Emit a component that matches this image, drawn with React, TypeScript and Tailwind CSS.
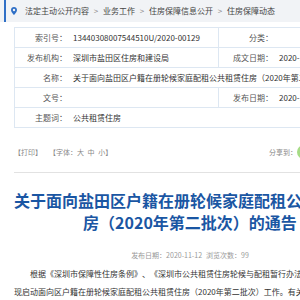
import React from "react";

type Pair = { label: string; value: string };

type Row = {
  left: Pair;
  right?: Pair;
};

const rows: Row[] = [
  {
    left: { label: "索引号：", value: "13440308007544510U/2020-00129" },
    right: { label: "分类：", value: "" },
  },
  {
    left: { label: "发布机构：", value: "深圳市盐田区住房和建设局" },
    right: { label: "成文日期：", value: "2020-11-12" },
  },
  {
    left: {
      label: "名称：",
      value:
        "关于面向盐田区户籍在册轮候家庭配租公共租赁住房（2020年第二批次）的通告",
    },
  },
  {
    left: { label: "文号：", value: "" },
    right: { label: "发布日期：", value: "2020-11-12" },
  },
  { left: { label: "主题词：", value: "公共租赁住房" } },
];

const crumbs = ["法定主动公开内容", "业务工作", "住房保障信息公开", "住房保障动态"];

function Pin() {
  return (
    <svg width="6" height="8" viewBox="0 0 12 16" className="shrink-0">
      <path
        d="M6 0C2.7 0 0 2.6 0 5.9 0 10.3 6 16 6 16s6-5.7 6-10.1C12 2.6 9.3 0 6 0zm0 8.3a2.4 2.4 0 1 1 0-4.8 2.4 2.4 0 0 1 0 4.8z"
        fill="#2f6fc6"
      />
    </svg>
  );
}

function Breadcrumb() {
  return (
    <div className="flex h-[22px] items-center bg-[#f1f3f6] text-[8px] leading-[22px] text-[#444]">
      <div className="ml-[4px] h-full w-[2px] bg-[#2f6fc6]" />
      <div className="ml-[5px]">
        <Pin />
      </div>
      <div className="ml-[8px] flex items-center whitespace-nowrap">
        {crumbs.map((c, i) => (
          <span key={c} className="flex items-center">
            {i > 0 && <span className="mx-[4px] w-[6px] text-center text-[#888]">&gt;</span>}
            {c}
          </span>
        ))}
      </div>
    </div>
  );
}

function InfoTable() {
  return (
    <div className="mt-[5px] border border-b-0 border-[#dde7f2] text-[8px]">
      {rows.map((r, i) => (
        <div
          key={i}
          className="flex h-[20px] items-center border-b border-[#dde7f2] leading-[19px] whitespace-nowrap"
        >
          <div className="w-[54px] shrink-0 pr-[2px] text-right text-[#555]">
            {r.left.label}
          </div>
          {r.right ? (
            <>
              <div className="h-full w-[150px] shrink-0 border-r border-[#dde7f2] pl-[4px] text-[#333]">
                {r.left.value}
              </div>
              <div className="w-[56px] shrink-0 pr-[2px] text-right text-[#555]">
                {r.right.label}
              </div>
              <div className="flex-1 pl-[4px] text-[#333]">{r.right.value}</div>
            </>
          ) : (
            <div className="flex-1 overflow-hidden pl-[4px] text-[#333]">
              {r.left.value}
            </div>
          )}
        </div>
      ))}
    </div>
  );
}

function ToolLine() {
  return (
    <div className="mt-[16px] flex h-[16px] items-center justify-between text-[7px] leading-[16px] text-[#888]">
      <div className="flex gap-[7px]">
        <span>【打印】</span>
        <span>
          【字体：大<span className="mx-[2px]"> 中 </span>小】
        </span>
      </div>
      <div className="flex items-center">
        <span>分享到：</span>
        <div className="flex gap-[3px]">
          <span className="h-[14px] w-[15px] rounded-full bg-[#a6dc86]" />
          <span className="h-[14px] w-[15px] rounded-full bg-[#e5564b]" />
          <span className="h-[14px] w-[15px] rounded-full bg-[#3f93e0]" />
          <span className="h-[14px] w-[15px] rounded-full bg-[#f2b12b]" />
        </div>
      </div>
    </div>
  );
}

export default function App() {
  return (
    <div className="h-[300px] w-[300px] overflow-hidden bg-white">
      <div className="w-[380px] font-['Noto_Sans_CJK_SC','Liberation_Sans',sans-serif] [text-spacing-trim:space-all]">
        <Breadcrumb />
        <div className="px-[14px]">
          <InfoTable />
          <ToolLine />
          <div className="mt-[12px] border-t border-[#e2e2e2]" />
          <h1 className="mt-[16px] text-center text-[16px] leading-[22px] font-bold text-[#1a56a3]">
            关于面向盐田区户籍在册轮候家庭配租公共租赁住房（2020年第二批次）的通告
          </h1>
          <div className="mt-[16px] text-center text-[7px] leading-[12px] text-[#999]">
            发布日期：2020-11-12<span className="ml-[4px]">浏览次数：99</span>
          </div>
          <p className="mt-[4px] indent-[2em] text-[8px] leading-[18px] text-[#333]">
            根据《深圳市保障性住房条例》、《深圳市公共租赁住房轮候与配租暂行办法》等规定，盐田区现启动面向区户籍在册轮候家庭配租公共租赁住房（2020年第二批次）工作。有关事项通告如下：
          </p>
        </div>
      </div>
    </div>
  );
}
